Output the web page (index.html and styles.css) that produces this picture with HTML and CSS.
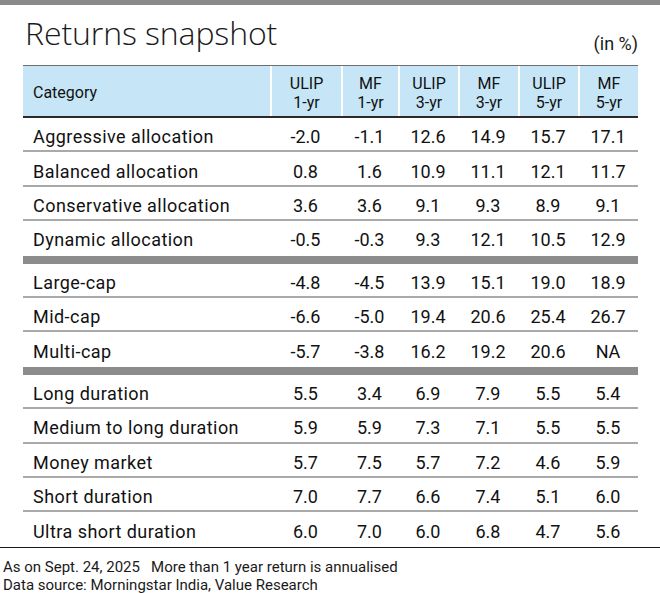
FILE: index.html
```html
<!DOCTYPE html>
<html lang="en">
<head>
<meta charset="utf-8">
<title>Returns snapshot</title>
<link rel="stylesheet" href="styles.css">
</head>
<body>
<div class="topbar"></div>
<div class="head">
  <h1 class="title">Returns snapshot</h1>
  <div class="unit">(in %)</div>
</div>
<div class="table">
  <div class="row hdr">
    <div class="cell label">Category</div>
    <div class="cell">ULIP<br>1-yr</div>
    <div class="cell">MF<br>1-yr</div>
    <div class="cell">ULIP<br>3-yr</div>
    <div class="cell">MF<br>3-yr</div>
    <div class="cell">ULIP<br>5-yr</div>
    <div class="cell">MF<br>5-yr</div>
  </div>
  <div class="group">
    <div class="row"><div class="cell label">Aggressive allocation</div><div class="cell">-2.0</div><div class="cell">-1.1</div><div class="cell">12.6</div><div class="cell">14.9</div><div class="cell">15.7</div><div class="cell">17.1</div></div>
    <div class="row"><div class="cell label">Balanced allocation</div><div class="cell">0.8</div><div class="cell">1.6</div><div class="cell">10.9</div><div class="cell">11.1</div><div class="cell">12.1</div><div class="cell">11.7</div></div>
    <div class="row"><div class="cell label">Conservative allocation</div><div class="cell">3.6</div><div class="cell">3.6</div><div class="cell">9.1</div><div class="cell">9.3</div><div class="cell">8.9</div><div class="cell">9.1</div></div>
    <div class="row"><div class="cell label">Dynamic allocation</div><div class="cell">-0.5</div><div class="cell">-0.3</div><div class="cell">9.3</div><div class="cell">12.1</div><div class="cell">10.5</div><div class="cell">12.9</div></div>
  </div>
  <div class="group">
    <div class="row"><div class="cell label">Large-cap</div><div class="cell">-4.8</div><div class="cell">-4.5</div><div class="cell">13.9</div><div class="cell">15.1</div><div class="cell">19.0</div><div class="cell">18.9</div></div>
    <div class="row"><div class="cell label">Mid-cap</div><div class="cell">-6.6</div><div class="cell">-5.0</div><div class="cell">19.4</div><div class="cell">20.6</div><div class="cell">25.4</div><div class="cell">26.7</div></div>
    <div class="row"><div class="cell label">Multi-cap</div><div class="cell">-5.7</div><div class="cell">-3.8</div><div class="cell">16.2</div><div class="cell">19.2</div><div class="cell">20.6</div><div class="cell">NA</div></div>
  </div>
  <div class="group last">
    <div class="row"><div class="cell label">Long duration</div><div class="cell">5.5</div><div class="cell">3.4</div><div class="cell">6.9</div><div class="cell">7.9</div><div class="cell">5.5</div><div class="cell">5.4</div></div>
    <div class="row"><div class="cell label">Medium to long duration</div><div class="cell">5.9</div><div class="cell">5.9</div><div class="cell">7.3</div><div class="cell">7.1</div><div class="cell">5.5</div><div class="cell">5.5</div></div>
    <div class="row"><div class="cell label">Money market</div><div class="cell">5.7</div><div class="cell">7.5</div><div class="cell">5.7</div><div class="cell">7.2</div><div class="cell">4.6</div><div class="cell">5.9</div></div>
    <div class="row"><div class="cell label">Short duration</div><div class="cell">7.0</div><div class="cell">7.7</div><div class="cell">6.6</div><div class="cell">7.4</div><div class="cell">5.1</div><div class="cell">6.0</div></div>
    <div class="row"><div class="cell label">Ultra short duration</div><div class="cell">6.0</div><div class="cell">7.0</div><div class="cell">6.0</div><div class="cell">6.8</div><div class="cell">4.7</div><div class="cell">5.6</div></div>
  </div>
</div>
<div class="footer">
  <p>As on Sept. 24, 2025&nbsp;&nbsp;&nbsp;More than 1 year return is annualised</p>
  <p>Data source: Morningstar India, Value Research</p>
</div>
</body>
</html>
```

FILE: styles.css
```css
* { box-sizing: border-box; }
html, body { margin: 0; padding: 0; background: #fff; }
body {
  width: 660px;
  height: 593px;
  overflow: hidden;
  font-family: Roboto, "Liberation Sans", sans-serif;
  color: #111;
}
.topbar {
  height: 5px;
  background: #8a8a8a;
}
.head {
  display: flex;
  justify-content: space-between;
  align-items: flex-end;
  height: 60px;
  padding: 0 22px 0 25px;
}
.title {
  margin: 0 0 12px 0;
  font-family: "Open Sans", sans-serif;
  font-weight: 300;
  font-size: 32px;
  line-height: 40px;
  color: #1a1a1a;
  letter-spacing: -0.1px;
}
.unit {
  font-size: 18px;
  line-height: 20px;
  margin-bottom: 11px;
  color: #1a1a1a;
}
.table {
  margin-left: 23px;
  width: 615px;
}
.row {
  display: grid;
  grid-template-columns: 247px 71px 57px 60px 60px 60px 60px;
  height: 34.4px;
  border-bottom: 2px solid #a9a9a9;
  font-size: 18px;
}
.row .cell {
  display: flex;
  align-items: center;
  justify-content: center;
  padding-top: 5px;
}
.row .label {
  justify-content: flex-start;
  padding-left: 10px;
  letter-spacing: 0.45px;
}
.hdr {
  height: 53px;
  background: #c6e6f7;
  border-top: 1.5px solid #6e6e6e;
  border-bottom: 2px solid #2a2a2a;
  font-size: 16px;
  line-height: 19px;
}
.hdr .cell {
  text-align: center;
  padding-top: 3px;
  border-left: 2px solid #fff;
}
.hdr .label {
  border-left: none;
  letter-spacing: 0;
}
.group .row:last-child {
  height: 42.4px;
  padding-bottom: 2px;
  border-bottom: 8px solid #8c8c8c;
}
.group.last .row:last-child {
  height: 34.6px;
  padding-bottom: 2px;
  border-bottom: none;
}
.footer {
  border-top: 1.5px solid #1a1a1a;
  padding: 10px 0 0 3px;
  font-size: 15px;
  line-height: 18px;
  color: #1a1a1a;
}
.footer p { margin: 0; }
```
